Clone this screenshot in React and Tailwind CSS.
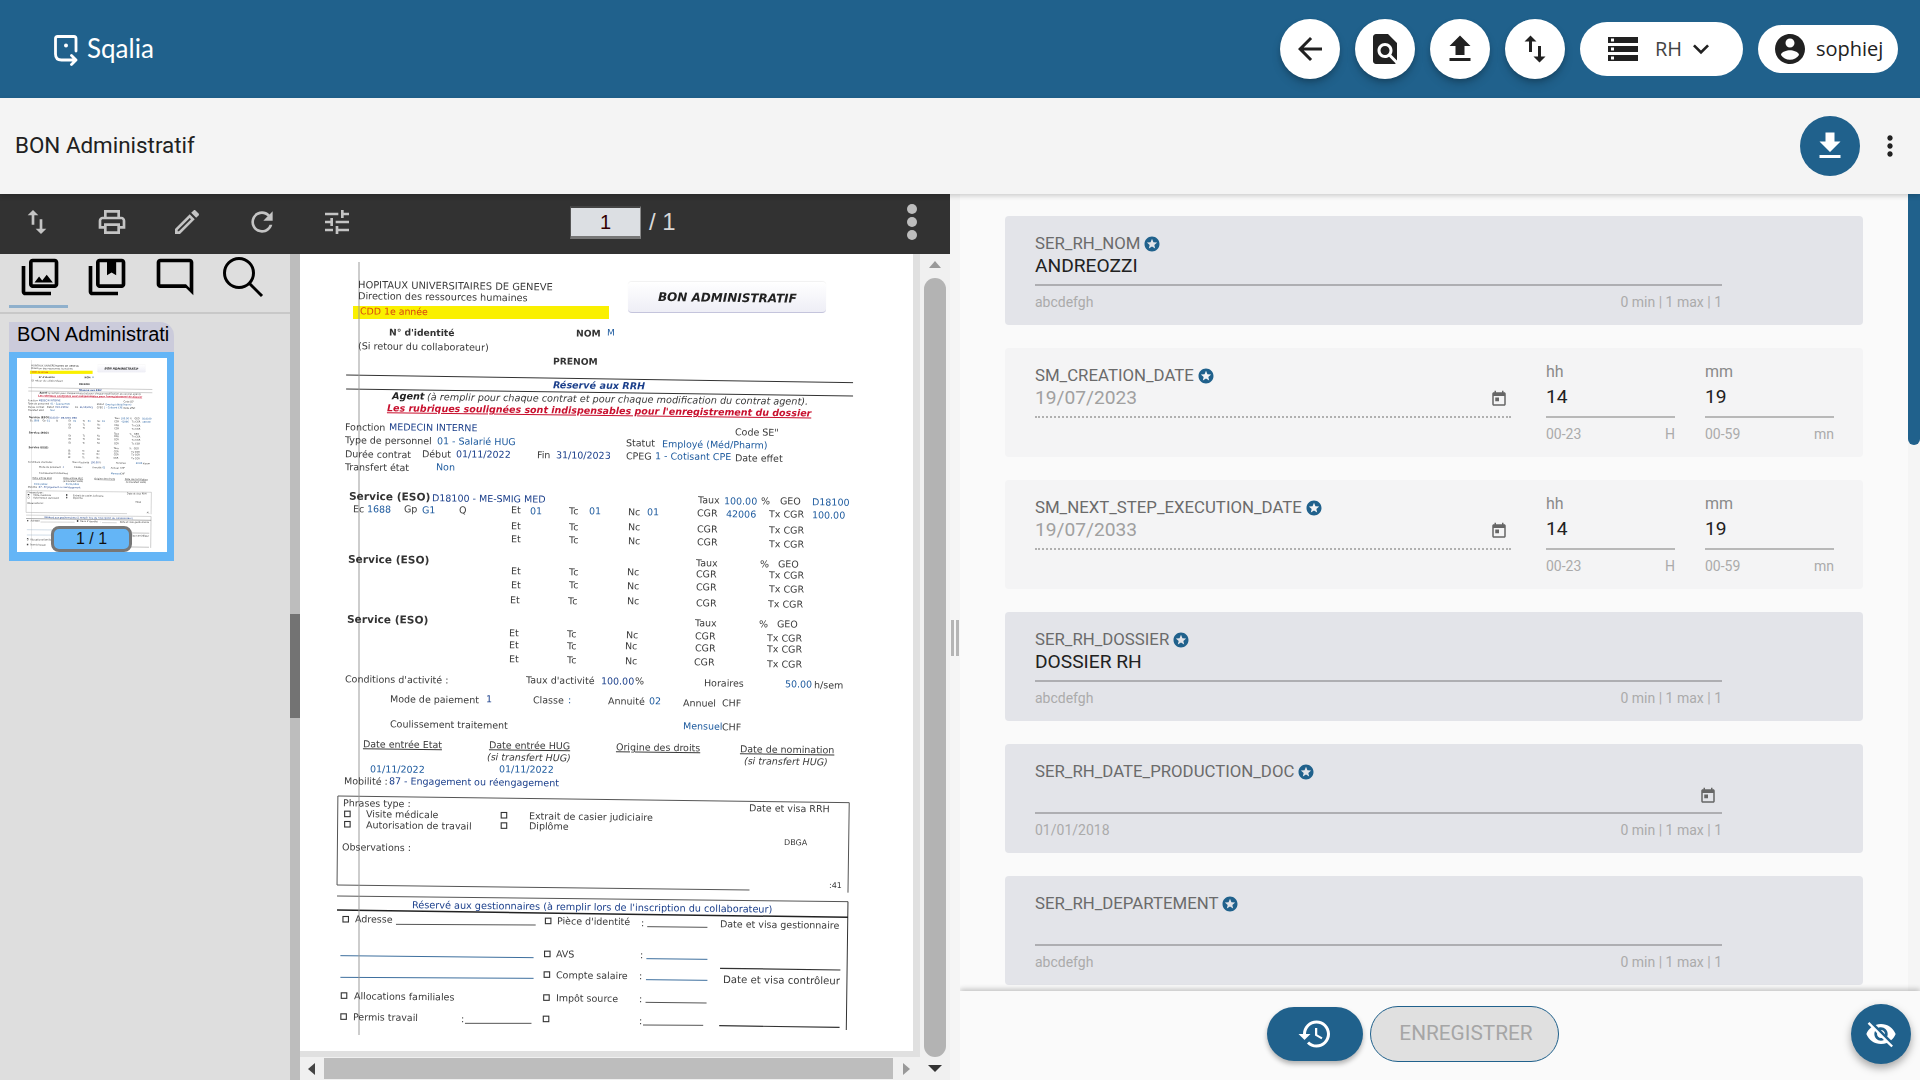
import { Fragment } from 'react';

const icons = {
  back: 'M20 11H7.83l5.59-5.59L12 4l-8 8 8 8 1.41-1.41L7.83 13H20v-2z',
  find: 'M20 19.59V8l-6-6H6c-1.1 0-1.99.9-1.99 2L4 20c0 1.1.89 2 1.99 2H18c.45 0 .85-.15 1.19-.4l-4.43-4.43c-.8.52-1.74.83-2.76.83-2.76 0-5-2.24-5-5s2.24-5 5-5 5 2.24 5 5c0 1.02-.31 1.96-.83 2.75L20 19.59zM9 13c0 1.66 1.34 3 3 3s3-1.34 3-3-1.34-3-3-3-3 1.34-3 3z',
  upload: 'M9 16h6v-6h4l-7-7-7 7h4zm-4 2h14v2H5z',
  download: 'M19 9h-4V3H9v6H5l7 7 7-7zM5 18v2h14v-2H5z',
  swap: 'M16 17.01V10h-2v7.01h-3L15 21l4-3.99h-3zM9 3L5 6.99h3V14h2V6.99h3L9 3z',
  storage: 'M2 20h20v-4H2v4zm2-3h2v2H4v-2zM2 4v4h20V4H2zm4 3H4V5h2v2zm-4 7h20v-4H2v4zm2-3h2v2H4v-2z',
  chevron: 'M16.59 8.59L12 13.17 7.41 8.59 6 10l6 6 6-6z',
  account: 'M12 2C6.48 2 2 6.48 2 12s4.48 10 10 10 10-4.48 10-10S17.52 2 12 2zm0 3c1.66 0 3 1.34 3 3s-1.34 3-3 3-3-1.34-3-3 1.34-3 3-3zm0 14.2c-2.5 0-4.71-1.28-6-3.22.03-1.99 4-3.08 6-3.08 1.99 0 5.97 1.09 6 3.08-1.29 1.94-3.5 3.22-6 3.22z',
  more: 'M12 8c1.1 0 2-.9 2-2s-.9-2-2-2-2 .9-2 2 .9 2 2 2zm0 2c-1.1 0-2 .9-2 2s.9 2 2 2 2-.9 2-2-.9-2-2-2zm0 6c-1.1 0-2 .9-2 2s.9 2 2 2 2-.9 2-2-.9-2-2-2z',
  print: 'M19 8h-1V3H6v5H5c-1.66 0-3 1.34-3 3v6h4v4h12v-4h4v-6c0-1.66-1.34-3-3-3zM8 5h8v3H8V5zm8 12v2H8v-4h8v2zm2-2v-2H6v2H4v-4c0-.55.45-1 1-1h14c.55 0 1 .45 1 1v4h-2z',
  edit: 'M14.06 9.02l.92.92L5.92 19H5v-.92l9.06-9.06M17.66 3c-.25 0-.51.1-.7.29l-1.83 1.83 3.75 3.75 1.83-1.83c.39-.39.39-1.02 0-1.41l-2.34-2.34c-.2-.2-.45-.29-.71-.29zm-3.6 3.19L3 17.25V21h3.75L17.81 9.94l-3.75-3.75z',
  refresh: 'M17.65 6.35C16.2 4.9 14.21 4 12 4c-4.42 0-7.99 3.58-7.99 8s3.57 8 7.99 8c3.73 0 6.84-2.55 7.73-6h-2.08c-.82 2.33-3.04 4-5.65 4-3.31 0-6-2.69-6-6s2.69-6 6-6c1.66 0 3.14.69 4.22 1.78L13 11h7V4l-2.35 2.35z',
  tune: 'M3 17v2h6v-2H3zM3 5v2h10V5H3zm10 16v-2h8v-2h-8v-2h-2v6h2zM7 9v2H3v2h4v2h2V9H7zm14 4v-2H11v2h10zm-6-4h2V7h4V5h-4V3h-2v6z',
  photos: 'M20 4v12H8V4h12m0-2H8c-1.1 0-2 .9-2 2v12c0 1.1.9 2 2 2h12c1.1 0 2-.9 2-2V4c0-1.1-.9-2-2-2zm-8.5 9.67l1.69 2.26 2.48-3.1L19 15H9zM2 6v14c0 1.1.9 2 2 2h14v-2H4V6H2z',
  bookmarks: 'M20 4v12H8V4h12m0-2H8c-1.1 0-2 .9-2 2v12c0 1.1.9 2 2 2h12c1.1 0 2-.9 2-2V4c0-1.1-.9-2-2-2zM2 6v14c0 1.1.9 2 2 2h14v-2H4V6H2zM12 4v7l2.5-1.5L17 11V4h-5z',
  comment: 'M20 2H4c-1.1 0-2 .9-2 2v18l4-4h14c1.1 0 2-.9 2-2V4c0-1.1-.9-2-2-2zm0 14H6l-2 2V4h16v12z',
  star: 'M11.99 2C6.47 2 2 6.48 2 12s4.47 10 9.99 10C17.52 22 22 17.52 22 12S17.52 2 11.99 2zm4.24 16L12 15.45 7.77 18l1.12-4.81-3.73-3.23 4.92-.42L12 5l1.92 4.53 4.92.42-3.73 3.23L16.23 18z',
  today: 'M19 3h-1V1h-2v2H8V1H6v2H5c-1.11 0-1.99.9-1.99 2L3 19c0 1.1.89 2 2 2h14c1.1 0 2-.9 2-2V5c0-1.1-.9-2-2-2zm0 16H5V8h14v11zM7 10h5v5H7z',
  restore: 'M13 3c-4.97 0-9 4.03-9 9H1l3.89 3.89.07.14L9 12H6c0-3.87 3.13-7 7-7s7 3.13 7 7-3.13 7-7 7c-1.93 0-3.68-.79-4.94-2.06l-1.42 1.42C8.27 19.99 10.51 21 13 21c4.97 0 9-4.03 9-9s-4.03-9-9-9zm-1 5v5l4.28 2.54.72-1.21-3.5-2.08V8H12z',
  eyeOff: 'M12 7c2.76 0 5 2.24 5 5 0 .65-.13 1.26-.36 1.83l2.92 2.92c1.51-1.26 2.7-2.89 3.43-4.75-1.73-4.39-6-7.5-11-7.5-1.4 0-2.74.25-3.98.7l2.16 2.16C10.74 7.13 11.35 7 12 7zM2 4.27l2.28 2.28.46.46C3.08 8.3 1.78 10.02 1 12c1.73 4.39 6 7.5 11 7.5 1.55 0 3.03-.3 4.38-.84l.42.42L19.73 22 21 20.73 3.27 3 2 4.27zM7.53 9.8l1.55 1.55c-.05.21-.08.43-.08.65 0 1.66 1.34 3 3 3 .22 0 .44-.03.65-.08l1.55 1.55c-.67.33-1.41.53-2.2.53-2.76 0-5-2.24-5-5 0-.79.2-1.53.53-2.2zm4.31-.78l3.15 3.15.02-.16c0-1.66-1.34-3-3-3l-.17.01z',
};

function Icon({ name, className }) {
  return (
    <svg viewBox="0 0 24 24" fill="currentColor" className={className}>
      <path d={icons[name]} />
    </svg>
  );
}

// scanned form: [x, y, text, style, size], x/y read off the scan (page 613 x 797)
const kinds = {
  n: 'text-[#3a3a3a]',
  b: 'text-[#333] font-bold',
  l: 'text-[#1d5a9e]',
  d: 'text-[#1b3f8b]',
  u: 'text-[#3a3a3a] underline',
  i: 'text-[#3a3a3a] italic',
  r: 'text-[#c8102e] font-bold italic underline',
  h: 'text-[#1b3f8b] font-bold italic',
  t: 'text-[#222] font-bold italic',
  o: 'text-[#d9480f]',
};

const top = [
  [142, 105, 'HOPITAUX UNIVERSITAIRES DE GENEVE', 'n', 9.9],
  [142, 139, 'Direction des ressources humaines', 'n', 9.7],
  [146, 184, 'CDD 1e année', 'o', 9.4],
  [878, 140, 'BON ADMINISTRATIF', 't', 12],
  [218, 246, "N° d'identité", 'b', 9.2],
  [675, 250, 'NOM', 'b', 9.2],
  [752, 250, 'M', 'l', 9],
  [142, 288, '(Si retour du collaborateur)', 'n', 9.6],
  [620, 332, 'PRENOM', 'b', 9.2],
  [620, 404, 'Réservé aux RRH', 'h', 9.6],
  [226, 439, 'Agent', 't', 9.7],
  [312, 442, '(à remplir pour chaque contrat et pour chaque modification du contrat agent).', 'i', 9.7],
  [213, 473, "Les rubriques soulignées sont indispensables pour l'enregistrement du dossier", 'r', 9.5],
  [110, 530, 'Fonction', 'n'], [217, 531, 'MEDECIN INTERNE', 'd'], [1065, 545, 'Code SE"', 'n'],
  [110, 571, 'Type de personnel', 'n'], [335, 572, '01 - Salarié HUG', 'l'],
  [798, 580, 'Statut', 'n'], [886, 581, 'Employé (Méd/Pharm)', 'l'],
  [110, 611, 'Durée contrat', 'n'], [298, 611, 'Début', 'n'], [381, 612, '01/11/2022', 'd'],
  [581, 614, 'Fin', 'n'], [626, 615, '31/10/2023', 'd'], [798, 619, 'CPEG', 'n'],
  [870, 619, '1 - Cotisant CPE', 'l'], [1065, 624, 'Date effet', 'n'],
  [110, 651, 'Transfert état', 'n'], [334, 652, 'Non', 'l'],
  [120, 738, 'Service (ESO)', 'b', 10.6], [324, 743, 'D18100 - ME-SMIG MED', 'd'],
  [975, 750, 'Taux', 'n'], [1040, 752, '100.00', 'l'], [1130, 752, '%', 'n'], [1175, 754, 'GEO', 'n'], [1255, 755, 'D18100', 'l'],
  [129, 777, 'Ec', 'n'], [165, 778, '1688', 'l'], [256, 778, 'Gp', 'n'], [298, 780, 'G1', 'l'], [389, 780, 'Q', 'n'],
  [518, 781, 'Et', 'n'], [564, 782, '01', 'l'], [660, 783, 'Tc', 'n'], [708, 784, '01', 'l'], [803, 785, 'Nc', 'n'], [850, 786, '01', 'l'],
  [973, 789, 'CGR', 'n'], [1044, 792, '42006', 'l'], [1150, 793, 'Tx CGR', 'n'], [1255, 795, '100.00', 'l'],
  [117, 926, 'Service (ESO)', 'b', 10.6], [970, 938, 'Taux', 'n'], [1126, 941, '%', 'n'], [1171, 942, 'GEO', 'n'],
  [115, 1107, 'Service (ESO)', 'b', 10.6], [968, 1118, 'Taux', 'n'], [1124, 1122, '%', 'n'], [1169, 1122, 'GEO', 'n'],
];

const rows = [
  [518, 828], [518, 868], [516, 963], [516, 1004], [515, 1050], [513, 1150], [512, 1185], [511, 1228],
];

const bottom = [
  [108, 116, "Conditions d'activité :", 'n'], [538, 120, "Taux d'activité", 'n'], [714, 122, '100.00', 'd'], [797, 123, '%', 'n'],
  [959, 128, 'Horaires', 'n'], [1152, 131, '50.00', 'l'], [1222, 134, 'h/sem', 'n'],
  [215, 177, 'Mode de paiement', 'n'], [441, 178, '1', 'd'], [553, 181, 'Classe', 'n'], [636, 181, ':', 'l'],
  [731, 183, 'Annuité', 'n'], [830, 183, '02', 'l'], [909, 188, 'Annuel', 'n'], [1003, 189, 'CHF', 'n'],
  [213, 252, 'Coulissement traitement', 'n'], [909, 258, 'Mensuel', 'l'], [1003, 262, 'CHF', 'n'],
  [150, 313, 'Date entrée Etat', 'u'], [449, 316, 'Date entrée HUG', 'u'], [752, 322, 'Origine des droits', 'u'], [1046, 328, 'Date de nomination', 'u'],
  [444, 351, '(si transfert HUG)', 'i'], [1056, 363, '(si transfert HUG)', 'i'],
  [167, 386, '01/11/2022', 'l'], [472, 388, '01/11/2022', 'l'],
  [105, 423, 'Mobilité :', 'n'], [211, 423, '87 - Engagement ou réengagement', 'd'],
  [103, 490, 'Phrases type :', 'n'], [157, 522, 'Visite médicale', 'n'], [157, 554, 'Autorisation de travail', 'n'],
  [543, 528, 'Extrait de casier judiciaire', 'n'], [543, 557, 'Diplôme', 'n'], [1068, 505, 'Date et visa RRH', 'n'],
  [100, 620, 'Observations :', 'n'], [1150, 609, 'DBGA', 'n', 8], [1258, 737, ':41', 'n', 8],
  [266, 795, "Réservé aux gestionnaires (à remplir lors de l'inscription du collaborateur)", 'd', 9.7],
  [130, 837, 'Adresse', 'n'], [611, 844, "Pièce d'identité", 'n'], [810, 848, ':', 'n'], [999, 851, 'Date et visa gestionnaire', 'n'],
  [609, 942, 'AVS', 'n'], [808, 946, ':', 'n'], [608, 1005, 'Compte salaire', 'n'], [806, 1008, ':', 'n'],
  [1005, 1021, 'Date et visa contrôleur', 'n', 10.2],
  [128, 1067, 'Allocations familiales', 'n'], [608, 1074, 'Impôt source', 'n'], [806, 1077, ':', 'n'],
  [126, 1131, 'Permis travail', 'n'], [383, 1136, ':', 'n'], [805, 1142, ':', 'n'],
];

const topX = (x) => x / 2.45;
const topY = (y) => y / 3 - 4;
const botX = (x) => x / 2.376;
const botY = (y) => y / 3 + 386;

const rules = [
  [113, 375, 1355, 398, 1], [113, 417, 1355, 438, 1],
].map(([a, b, c, d, w]) => [topX(a), topY(b), topX(c), topY(d), w, '#333']).concat(
  [
    [90, 468, 1305, 488, 1, '#555'], [90, 468, 88, 735, 1, '#555'], [1305, 488, 1302, 758, 1, '#555'],
    [88, 735, 1068, 750, 1, '#555'], [88, 768, 1302, 785, 1, '#555'], [1302, 785, 1298, 1170, 1, '#333'],
    [88, 810, 1302, 832, 1.5, '#222'], [228, 853, 560, 855, 1, '#555'], [825, 860, 968, 862, 1, '#555'],
    [96, 947, 555, 953, 1, '#3d6f9e'], [823, 956, 968, 958, 1, '#3d6f9e'],
    [96, 1012, 555, 1015, 1, '#3d6f9e'], [822, 1019, 968, 1021, 1, '#3d6f9e'], [998, 985, 1284, 990, 1.2, '#333'],
    [821, 1087, 966, 1089, 1, '#555'], [392, 1150, 550, 1150, 1, '#555'], [815, 1155, 958, 1156, 1, '#555'],
    [996, 1157, 1282, 1162, 1.2, '#333'],
  ].map(([a, b, c, d, w, col]) => [botX(a), botY(b), botX(c), botY(d), w, col]),
);

const boxes = [
  [112, 521], [112, 552], [484, 525], [484, 556], [108, 837], [589, 842], [587, 941], [586, 1003],
  [104, 1066], [585, 1072], [103, 1129], [584, 1136],
];

function ScanText({ x, y, text, kind, size = 9.5 }) {
  return (
    <span
      className={`absolute whitespace-nowrap origin-left rotate-[0.7deg] -translate-y-1/2 leading-none ${kinds[kind]}`}
      style={{ left: x, top: y, fontSize: size }}
    >
      {text}
    </span>
  );
}

function ScanPage() {
  return (
    <div className="relative w-[613px] h-[797px] bg-white overflow-hidden blur-[0.4px] font-['DejaVu_Sans',sans-serif]">
      <div className="absolute left-[53px] top-[52px] w-[256px] h-[13px] bg-[#faf000]" />
      <div className="absolute left-[328px] top-[28px] w-[198px] h-[31px] rounded-sm bg-gradient-to-b from-white to-[#eeeef6] border-b border-[#c4c4dc] shadow-[0_-1px_1px_rgba(0,0,0,.06)]" />
      <svg viewBox="0 0 613 797" className="absolute inset-0 w-full h-full">
        {rules.map(([x1, y1, x2, y2, w, col], i) => (
          <line key={i} x1={x1} y1={y1} x2={x2} y2={y2} stroke={col} strokeWidth={w} />
        ))}
        {boxes.map(([x, y], i) => (
          <rect key={i} x={botX(x) - 2.5} y={botY(y) - 2.5} width="5.5" height="5.5" fill="none" stroke="#333" strokeWidth="1.1" />
        ))}
        <line x1="59" y1="8" x2="59" y2="781" stroke="#9a9a9a" strokeWidth="1.4" opacity="0.7" />
      </svg>
      {top.map(([x, y, text, kind, size], i) => (
        <ScanText key={i} x={topX(x)} y={topY(y)} text={text} kind={kind} size={size} />
      ))}
      {rows.map(([x, y], i) => (
        <Fragment key={i}>
          <ScanText x={topX(x)} y={topY(y)} text="Et" kind="n" />
          <ScanText x={topX(x + 142)} y={topY(y + 2)} text="Tc" kind="n" />
          <ScanText x={topX(x + 285)} y={topY(y + 4)} text="Nc" kind="n" />
          <ScanText x={topX(x + 455)} y={topY(y + 8)} text="CGR" kind="n" />
          <ScanText x={topX(x + 632)} y={topY(y + 13)} text="Tx CGR" kind="n" />
        </Fragment>
      ))}
      {bottom.map(([x, y, text, kind, size], i) => (
        <ScanText key={i} x={botX(x)} y={botY(y)} text={text} kind={kind} size={size} />
      ))}
    </div>
  );
}

function RoundButton({ name }) {
  return (
    <button className="w-[60px] h-[60px] rounded-full bg-white flex items-center justify-center text-[#212121] shadow-[0_3px_5px_-1px_rgba(0,0,0,.2),0_6px_10px_rgba(0,0,0,.14)]">
      <Icon name={name} className="w-9 h-9" />
    </button>
  );
}

function Header() {
  return (
    <header className="h-[98px] shrink-0 bg-[#20618c] flex items-center pl-[54px] pr-[22px]">
      <div className="flex items-center gap-[9px] text-white">
        <svg viewBox="0 0 24 31" fill="none" stroke="currentColor" strokeWidth="2.8" strokeLinecap="round" strokeLinejoin="round" className="w-6 h-[31px] mt-[2px]">
          <path d="M22 16V3.5Q22 1.5 20 1.5H3.5Q1.5 1.5 1.5 3.5V19Q1.5 25 7.5 25H21.5M17.5 20.5L22 25L17.5 29.5" />
          <circle cx="12" cy="10.5" r="2" fill="currentColor" stroke="none" />
        </svg>
        <span className="text-[26px] leading-none -mt-[3px] font-['Lato',sans-serif] font-normal">Sqalia</span>
      </div>
      <div className="ml-auto flex items-center gap-[15px]">
        <RoundButton name="back" />
        <RoundButton name="find" />
        <RoundButton name="upload" />
        <RoundButton name="swap" />
        <button className="w-[163px] h-[54px] rounded-full bg-white flex items-center pl-[25px] text-[#212121] font-['Open_Sans',sans-serif]">
          <Icon name="storage" className="w-9 h-9" />
          <span className="ml-[14px] text-xl text-[#444]">RH</span>
          <Icon name="chevron" className="ml-[3px] w-8 h-8" />
        </button>
        <button className="w-[140px] h-12 rounded-full bg-white flex items-center pl-[14px] text-[#212121] font-['Open_Sans',sans-serif]">
          <Icon name="account" className="w-9 h-9" />
          <span className="ml-2 text-xl">sophiej</span>
        </button>
      </div>
    </header>
  );
}

function SubHeader() {
  return (
    <div className="h-24 shrink-0 bg-[#f4f4f4] flex items-center pl-[15px] pr-[14px] z-10 shadow-[0_2px_5px_rgba(0,0,0,.18)]">
      <h1 className="text-[22.4px] text-[#212121]">BON Administratif</h1>
      <button className="ml-auto w-[60px] h-[60px] rounded-full bg-[#20618c] flex items-center justify-center text-white">
        <Icon name="download" className="w-9 h-9" />
      </button>
      <Icon name="more" className="ml-[14px] w-8 h-8 text-[#212121]" />
    </div>
  );
}

function Toolbar() {
  return (
    <div className="h-[60px] shrink-0 bg-[#323232] flex items-center pb-[4px] text-[#c4c4c4]">
      <div className="flex items-center pl-[21px] gap-[43px]">
        <Icon name="swap" className="w-8 h-8" />
        <Icon name="print" className="w-8 h-8" />
        <Icon name="edit" className="w-8 h-8" />
        <Icon name="refresh" className="w-8 h-8" />
        <Icon name="tune" className="w-8 h-8" />
      </div>
      <div className="ml-[217px] w-[71px] h-[33px] bg-[#dcdfe3] border-t-2 border-l border-r border-b-[3px] border-t-[#444] border-l-[#555] border-r-[#888] border-b-[#777] flex items-center justify-center text-[#300] text-xl font-['Liberation_Sans',sans-serif]">
        1
      </div>
      <span className="ml-2 text-2xl text-[#d8d8d8] font-['Liberation_Sans',sans-serif]">/ 1</span>
      <div className="ml-auto mr-[33px] flex flex-col gap-[3px]">
        <span className="w-[10px] h-[10px] rounded-full bg-[#bdbdbd]" />
        <span className="w-[10px] h-[10px] rounded-full bg-[#bdbdbd]" />
        <span className="w-[10px] h-[10px] rounded-full bg-[#bdbdbd]" />
      </div>
    </div>
  );
}

function Sidebar() {
  return (
    <div className="w-[290px] shrink-0 bg-[#dedede] flex flex-col">
      <div className="h-[60px] shrink-0 border-b-2 border-[#c8c8c8] flex items-start pl-[18px] pt-[1px] gap-[23px] relative text-black">
        <Icon name="photos" className="w-11 h-11" />
        <Icon name="bookmarks" className="w-11 h-11" />
        <Icon name="comment" className="w-11 h-11 ml-[1px] -scale-x-100" />
        <svg viewBox="0 0 44 44" fill="none" stroke="currentColor" strokeWidth="3" className="w-11 h-11 ml-[1px]">
          <circle cx="18" cy="18" r="14.5" />
          <path d="M28.5 28.5L41 41" />
        </svg>
        <div className="absolute left-[9px] bottom-[4px] w-[59px] h-[3px] bg-[#8fb0cc]" />
      </div>
      <div className="mt-[8px] ml-[9px] w-[165px] font-['Liberation_Sans',sans-serif]">
        <div className="h-[30px] bg-[#cbcbdb] rounded-tr-[14px] pl-[8px] text-xl leading-[24px] text-black">
          <div className="w-[152px] whitespace-nowrap overflow-hidden">BON Administratif</div>
        </div>
        <div className="bg-[#64b5f6] p-[6px_8px_9px] h-[209px] relative">
          <div className="w-[150px] h-[194px] overflow-hidden bg-white">
            <div className="origin-top-left scale-[0.2447]">
              <ScanPage />
            </div>
          </div>
          <div className="absolute left-[42px] bottom-[9px] w-[81px] h-[26px] rounded-lg border-[3px] border-[#777] bg-[#64b5f6] flex items-center justify-center text-base text-[#111]">
            1 / 1
          </div>
        </div>
      </div>
    </div>
  );
}

function Viewer() {
  return (
    <div className="flex-1 flex min-w-0">
      <div className="w-[10px] shrink-0 bg-[#bdbdbd]">
        <div className="mt-[360px] h-[104px] bg-[#737373]" />
      </div>
      <div className="w-[620px] shrink-0 flex flex-col bg-[#e0e0e0]">
        <div className="flex-1">
          <ScanPage />
        </div>
        <div className="h-[23px] bg-[#f0f0f0] flex items-center">
          <span className="ml-[8px] w-0 h-0 border-y-[6px] border-y-transparent border-r-[7px] border-r-[#444]" />
          <div className="ml-[9px] w-[569px] h-[21px] bg-[#bdbdbd]" />
          <span className="ml-[10px] w-0 h-0 border-y-[6px] border-y-transparent border-l-[7px] border-l-[#999]" />
        </div>
      </div>
      <div className="w-[30px] shrink-0 bg-[#f0f0f0] flex flex-col items-center">
        <span className="mt-[7px] w-0 h-0 border-x-[6px] border-x-transparent border-b-[7px] border-b-[#999]" />
        <div className="mt-[10px] w-[22px] h-[779px] rounded-full bg-[#b3b3b3]" />
        <span className="mt-[8px] w-0 h-0 border-x-[7px] border-x-transparent border-t-[7px] border-t-[#333]" />
      </div>
    </div>
  );
}

function FieldLabel({ text }) {
  return (
    <div className="h-5 flex items-center gap-[3px] text-[16.8px] text-[#6b6b6b] whitespace-nowrap">
      {text}
      <Icon name="star" className="w-[18px] h-[18px] text-[#20618c]" />
    </div>
  );
}

function Hints({ left, right }) {
  return (
    <div className="mt-[6px] flex justify-between text-sm leading-5 text-[#ababab]">
      <span>{left}</span>
      <span>{right}</span>
    </div>
  );
}

function TextField({ label, value, hint, calendar, active = true }) {
  return (
    <div className={`h-[109px] shrink-0 rounded-[4px] pl-[30px] pr-[141px] pt-[18px] ${active ? 'bg-[#e3e4e9]' : 'bg-[#f4f4f5]'}`}>
      <FieldLabel text={label} />
      <div className="h-[32px] border-b-2 border-[#aeaeb2] flex items-center justify-between text-[19.2px] text-[#212121]">
        <span className="pb-[6px]">{value}</span>
        {calendar && <Icon name="today" className="mr-[5px] -mt-[3px] w-[18px] h-[18px] text-[#666]" />}
      </div>
      <Hints left={hint} right="0 min | 1 max | 1" />
    </div>
  );
}

function TimeBox({ head, value, range, unit }) {
  return (
    <div className="w-[129px]">
      <div className="h-5 text-base text-[#8a8a8a]">{head}</div>
      <div className="h-[38px] border-b-2 border-[#b8b8b8] text-[19.2px] text-[#212121] leading-[34px]">{value}</div>
      <Hints left={range} right={unit} />
    </div>
  );
}

function DateField({ label, date }) {
  return (
    <div className="h-[109px] shrink-0 rounded-[4px] bg-[#f4f4f5] pl-[30px] pr-[29px] flex">
      <div className="w-[476px] pt-[18px]">
        <FieldLabel text={label} />
        <div className="h-[32px] border-b-2 border-dotted border-[#b0b0b0] flex items-center justify-between text-[19.2px] text-[#a0a0a0]">
          <span className="pb-[6px]">{date}</span>
          <Icon name="today" className="mr-[3px] -mt-[4px] w-[18px] h-[18px] text-[#666]" />
        </div>
      </div>
      <div className="ml-[35px] pt-[12px] flex gap-[30px]">
        <TimeBox head="hh" value="14" range="00-23" unit="H" />
        <TimeBox head="mm" value="19" range="00-59" unit="mn" />
      </div>
    </div>
  );
}

function FormPanel() {
  return (
    <div className="flex-1 min-w-0 flex flex-col bg-[#fafafa] overflow-hidden">
      <div className="flex-1 min-h-0 flex overflow-hidden">
        <div className="flex-1 min-w-0 pt-[22px] pl-[45px] pr-[45px] flex flex-col gap-[23px]">
          <TextField label="SER_RH_NOM" value="ANDREOZZI" hint="abcdefgh" />
          <DateField label="SM_CREATION_DATE" date="19/07/2023" />
          <DateField label="SM_NEXT_STEP_EXECUTION_DATE" date="19/07/2033" />
          <TextField label="SER_RH_DOSSIER" value="DOSSIER RH" hint="abcdefgh" />
          <TextField label="SER_RH_DATE_PRODUCTION_DOC" value="" hint="01/01/2018" calendar />
          <TextField label="SER_RH_DEPARTEMENT" value="" hint="abcdefgh" />
        </div>
        <div className="w-3 shrink-0 bg-[#f5f5f5]">
          <div className="h-[251px] bg-[#20618c] rounded-b-md" />
        </div>
      </div>
      <div className="h-[89px] shrink-0 relative bg-[#fafafa] flex items-center justify-center gap-[7px] pr-[55px] pb-[4px] shadow-[0_-2px_5px_rgba(0,0,0,.22)]">
        <button className="w-[96px] h-[54px] rounded-[27px] bg-[#20618c] flex items-center justify-center text-white shadow-[0_3px_5px_rgba(0,0,0,.3)]">
          <Icon name="restore" className="w-9 h-9" />
        </button>
        <button className="w-[189px] h-[56px] rounded-[28px] bg-[#e0e0e0] border border-[#20618c] pl-[4px] text-[20.8px] text-[#a6a6a6]">ENREGISTRER</button>
        <button className="absolute right-[9px] bottom-[16px] w-[60px] h-[60px] rounded-full bg-[#20618c] flex items-center justify-center text-white shadow-[0_4px_8px_rgba(0,0,0,.35)]">
          <Icon name="eyeOff" className="w-8 h-8" />
        </button>
      </div>
    </div>
  );
}

export default function App() {
  return (
    <div className="w-[1920px] h-[1080px] overflow-hidden flex flex-col font-['Roboto',sans-serif]">
      <Header />
      <SubHeader />
      <div className="flex-1 min-h-0 flex">
        <div className="w-[950px] shrink-0 flex flex-col">
          <Toolbar />
          <div className="flex-1 min-h-0 flex">
            <Sidebar />
            <Viewer />
          </div>
        </div>
        <div className="w-[10px] shrink-0 bg-[#f5f5f5] flex items-start justify-center gap-[2px] pt-[426px]">
          <span className="w-[3px] h-9 bg-[#b5b5b5]" />
          <span className="w-[3px] h-9 bg-[#b5b5b5]" />
        </div>
        <FormPanel />
      </div>
    </div>
  );
}
